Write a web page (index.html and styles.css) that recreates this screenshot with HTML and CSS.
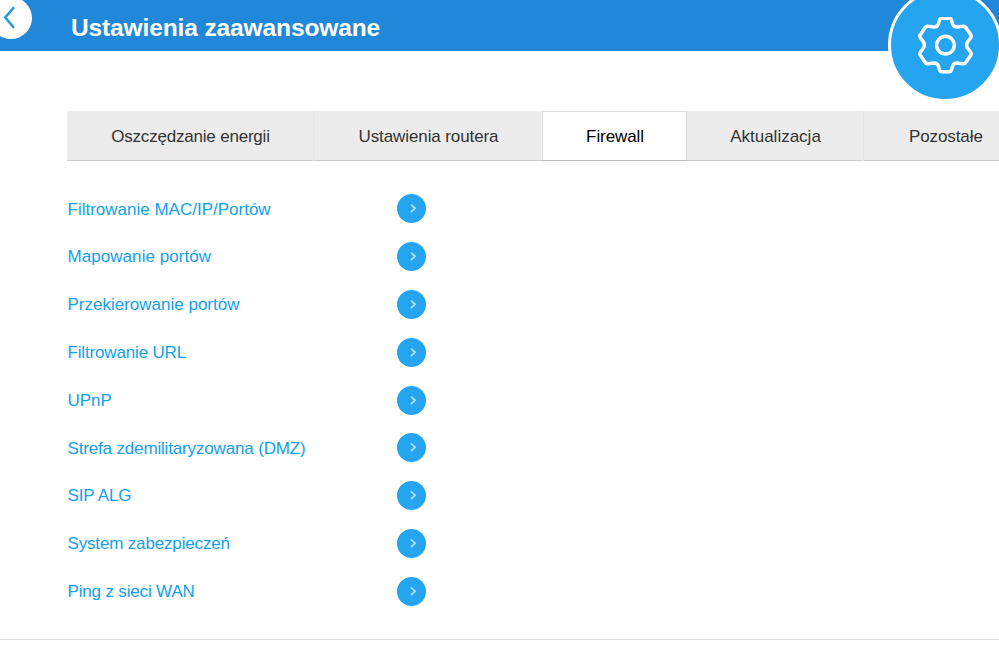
FILE: index.html
```html
<!DOCTYPE html>
<html lang="pl">
<head>
    <meta charset="UTF-8">
    <meta name="viewport" content="width=device-width, initial-scale=1.0">
    <title>Ustawienia zaawansowane</title>
    <link rel="stylesheet" href="styles.css">
</head>
<body>

<header class="header">
    <a href="#" class="back">
        <svg width="42" height="42" viewBox="0 0 42 42"><path d="M23.3 11L15.3 20.5L23.3 30" fill="none" stroke="#2799df" stroke-width="2.6" stroke-linecap="round"/></svg>
    </a>
    <h1>Ustawienia zaawansowane</h1>
    <div class="badge">
        <svg width="57" height="57" viewBox="141 51 171 171" fill="none" stroke="#fff" stroke-width="10.5" stroke-linejoin="round">
            <path d="M214 55H239Q243 55 244 59L248 72Q251 81 261 81L279 79Q284 78 287 82L302 104Q305 108 302 113L292 127Q288 135 292 143L302 157Q305 162 302 166L287 188Q284 192 279 191L261 189Q251 189 248 198L244 211Q243 215 239 215H214Q210 215 209 211L205 198Q202 189 192 189L174 191Q169 192 166 188L151 166Q148 162 151 157L161 143Q165 135 161 127L151 113Q148 108 151 104L166 82Q169 78 174 79L192 81Q202 81 205 72L209 59Q210 55 214 55Z"/>
            <circle cx="226.5" cy="135.5" r="26.5"/>
        </svg>
    </div>
</header>

<nav class="tabs">
    <a href="#" class="tab tab-energy">Oszczędzanie energii</a>
    <a href="#" class="tab tab-router">Ustawienia routera</a>
    <a href="#" class="tab tab-firewall active">Firewall</a>
    <a href="#" class="tab tab-update">Aktualizacja</a>
    <a href="#" class="tab tab-other">Pozostałe</a>
</nav>

<main class="menu">
    <a href="#" class="item"><span>Filtrowanie MAC/IP/Portów</span><svg class="arrow" viewBox="0 0 29 29"><path d="M14 10.5L18 14.3L14 18.2"/></svg></a>
    <a href="#" class="item wide"><span>Mapowanie portów</span><svg class="arrow" viewBox="0 0 29 29"><path d="M14 10.5L18 14.3L14 18.2"/></svg></a>
    <a href="#" class="item"><span>Przekierowanie portów</span><svg class="arrow" viewBox="0 0 29 29"><path d="M14 10.5L18 14.3L14 18.2"/></svg></a>
    <a href="#" class="item narrow"><span>Filtrowanie URL</span><svg class="arrow" viewBox="0 0 29 29"><path d="M14 10.5L18 14.3L14 18.2"/></svg></a>
    <a href="#" class="item"><span>UPnP</span><svg class="arrow" viewBox="0 0 29 29"><path d="M14 10.5L18 14.3L14 18.2"/></svg></a>
    <a href="#" class="item narrow"><span>Strefa zdemilitaryzowana (DMZ)</span><svg class="arrow" viewBox="0 0 29 29"><path d="M14 10.5L18 14.3L14 18.2"/></svg></a>
    <a href="#" class="item narrow"><span>SIP ALG</span><svg class="arrow" viewBox="0 0 29 29"><path d="M14 10.5L18 14.3L14 18.2"/></svg></a>
    <a href="#" class="item narrow"><span>System zabezpieczeń</span><svg class="arrow" viewBox="0 0 29 29"><path d="M14 10.5L18 14.3L14 18.2"/></svg></a>
    <a href="#" class="item narrow"><span>Ping z sieci WAN</span><svg class="arrow" viewBox="0 0 29 29"><path d="M14 10.5L18 14.3L14 18.2"/></svg></a>
</main>

<footer class="footer"></footer>

</body>
</html>
```
FILE: styles.css
```css
* {
    box-sizing: border-box;
}

body {
    margin: 0;
    background-color: #fff;
    font-family: "Liberation Sans", Arial, sans-serif;
    font-size: 17px;
}

a {
    text-decoration: none;
}

.header {
    position: relative;
    height: 51px;
    padding-left: 71px;
    background-color: #2188d9;
    overflow-x: clip;
}

.header h1 {
    margin: 0;
    font-size: 24.5px;
    letter-spacing: -0.12px;
    line-height: 56px;
    color: #fff;
}

.back {
    position: absolute;
    top: -3px;
    left: -10px;
    width: 42px;
    height: 42px;
    border-radius: 50%;
    background-color: #fff;
}

.back svg {
    display: block;
}

.badge {
    position: absolute;
    top: -12px;
    left: 888px;
    width: 114px;
    height: 114px;
    display: flex;
    align-items: center;
    justify-content: center;
    border: 3px solid #fff;
    border-radius: 50%;
    background-color: #25a5ef;
}

.tabs {
    display: flex;
    height: 50px;
    margin: 60px 0 0 67px;
    background-color: #ececec;
    border-bottom: 1px solid #ccc;
    overflow-x: clip;
}

.tab {
    flex: none;
    height: 50px;
    padding-left: 1px;
    border-right: 1px solid #e6e6e6;
    line-height: 51px;
    text-align: center;
    color: #333;
}

.tab-energy {
    width: 247px;
    letter-spacing: -0.2px;
}

.tab-router {
    width: 228px;
    border-right: none;
    letter-spacing: -0.1px;
}

.tab-firewall {
    width: 145px;
    letter-spacing: -0.1px;
}

.tab-update {
    width: 177px;
}

.tab-other {
    width: 135px;
    padding-left: 45px;
    border-right: none;
    text-align: left;
    letter-spacing: -0.1px;
}

.tab.active {
    border: 1px solid #ddd;
    border-bottom-color: #bbb;
    line-height: 49px;
    background-color: #fff;
    color: #000;
}

.menu {
    padding: 24px 0 0 67px;
}

.item {
    display: flex;
    align-items: center;
    width: 359px;
    height: 47.8px;
    color: #129fee;
}

.item span {
    flex: 1;
    padding: 1.5px 0 0 0.5px;
}

.item.narrow {
    letter-spacing: -0.16px;
}

.item.wide {
    letter-spacing: 0.06px;
}

.arrow {
    width: 29px;
    height: 29px;
    border-radius: 50%;
    background-color: #25a5ef;
    fill: none;
    stroke: #b9e3fa;
    stroke-width: 1.7;
}

.footer {
    margin-top: 24px;
    border-top: 1px solid #ddd;
}
```
